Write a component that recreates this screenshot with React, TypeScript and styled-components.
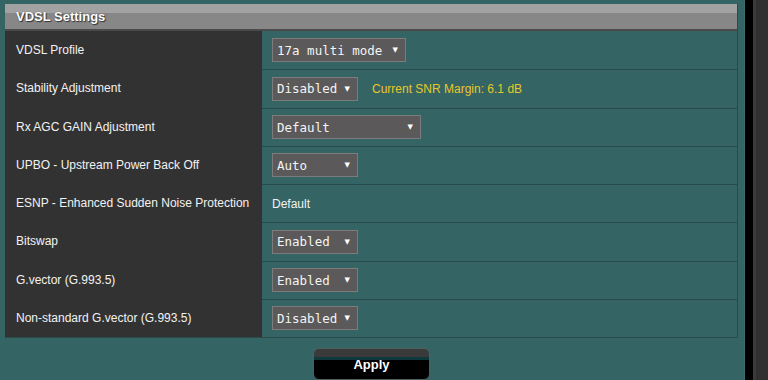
import React from "react";
import styled, { createGlobalStyle } from "styled-components";

const GlobalStyle = createGlobalStyle`
  html, body { margin: 0; padding: 0; background: #2e2e2e; overflow: hidden; }
  body { font-family: Arial, "Liberation Sans", sans-serif; }
`;

const Page = styled.div`
  display: flex;
  width: 768px;
  height: 380px;
  overflow: hidden;
`;

const Main = styled.div`
  width: 745px;
  background: #356464;
  box-sizing: border-box;
  padding: 4px 6px 0 5px;
  display: flex;
  flex-direction: column;
  align-items: stretch;
  border-right: 1px solid #3e6d6d;
`;

const BlackStrip = styled.div`
  width: 8px;
  background: #000;
`;

const SideStrip = styled.div`
  flex: 1;
  background: #303030;
  border-left: 3px solid #3a3a3a;
`;

const Table = styled.div`
  display: flex;
  flex-direction: column;
  border-right: 1px solid #2a4b4b;
  border-bottom: 1px solid #2a4b4b;
`;

const Header = styled.div`
  height: 27px;
  box-sizing: border-box;
  background: linear-gradient(#a2a2a2 0, #a2a2a2 9px, #878787 9px, #878787 100%);
  border-bottom: 2px solid #4a4a4a;
  color: #fff;
  font-weight: bold;
  font-size: 13px;
  display: flex;
  align-items: center;
  padding-left: 11px;
  text-shadow: 1px 1px 1px #333, 0 0 1px #444;
`;

const Row = styled.div`
  display: flex;
  height: 38.25px;
`;

const Label = styled.div`
  width: 257px;
  background: #323232;
  color: #f2f2f2;
  font-size: 12px;
  display: flex;
  align-items: center;
  padding-left: 11px;
  box-sizing: border-box;
  flex-shrink: 0;
`;

const Value = styled.div<{ $first?: boolean }>`
  flex: 1;
  background: #356464;
  display: flex;
  align-items: center;
  padding-left: 10px;
  gap: 14px;
  color: #f2f2f2;
  font-size: 12px;
  box-sizing: border-box;
  border-top: ${(p) => (p.$first ? "none" : "1px solid #2a4b4b")};
`;

const Select = styled.div<{ $w: number }>`
  width: ${(p) => p.$w}px;
  height: 24px;
  box-sizing: border-box;
  background: #5b5959;
  border: 1px solid #7c7c7c;
  color: #f4f4f4;
  font-family: "DejaVu Sans Mono", "Liberation Mono", monospace;
  font-size: 12.5px;
  display: flex;
  align-items: center;
  justify-content: space-between;
  padding: 0 7px 0 4px;
`;

const Arrow = styled.span`
  font-size: 7px;
  color: #fff;
  font-family: "DejaVu Sans", sans-serif;
`;

const Note = styled.span`
  color: #e8c72a;
  font-size: 12px;
`;

const Footer = styled.div`
  display: flex;
  justify-content: center;
  padding-top: 10px;
`;

const ApplyButton = styled.button`
  width: 117px;
  height: 32px;
  border-radius: 6px;
  border: 1px solid #4f5e5e;
  background: linear-gradient(#3a3a3a 0, #3a3a3a 8px, #0e3a3e 8px, #0e3a3e 11px, #000 11px, #000 100%);
  color: #fff;
  font-family: Arial, "Liberation Sans", sans-serif;
  font-weight: bold;
  font-size: 13px;
  padding: 0;
  display: flex;
  align-items: center;
  justify-content: center;
`;

type RowData = { label: string; value?: string; width?: number; text?: string; note?: string };

const rows: RowData[] = [
  { label: "VDSL Profile", value: "17a multi mode", width: 134 },
  { label: "Stability Adjustment", value: "Disabled", width: 86, note: "Current SNR Margin: 6.1 dB" },
  { label: "Rx AGC GAIN Adjustment", value: "Default", width: 149 },
  { label: "UPBO - Upstream Power Back Off", value: "Auto", width: 86 },
  { label: "ESNP - Enhanced Sudden Noise Protection", text: "Default" },
  { label: "Bitswap", value: "Enabled", width: 86 },
  { label: "G.vector (G.993.5)", value: "Enabled", width: 86 },
  { label: "Non-standard G.vector (G.993.5)", value: "Disabled", width: 86 },
];

export default function App() {
  return (
    <Page>
      <GlobalStyle />
      <Main>
        <Table>
          <Header>VDSL Settings</Header>
          {rows.map((r, i) => (
            <Row key={r.label}>
              <Label>{r.label}</Label>
              <Value $first={i === 0}>
                {r.value ? (
                  <Select $w={r.width || 86}>
                    <span>{r.value}</span>
                    <Arrow>▼</Arrow>
                  </Select>
                ) : (
                  r.text
                )}
                {r.note && <Note>{r.note}</Note>}
              </Value>
            </Row>
          ))}
        </Table>
        <Footer>
          <ApplyButton>Apply</ApplyButton>
        </Footer>
      </Main>
      <BlackStrip />
      <SideStrip />
    </Page>
  );
}
